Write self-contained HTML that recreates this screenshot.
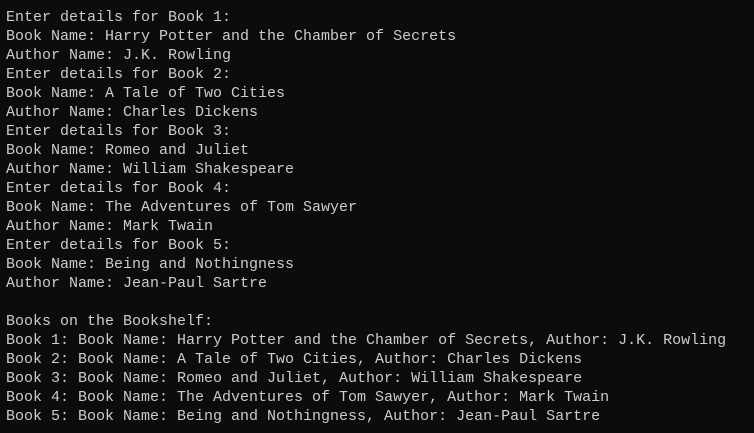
<!DOCTYPE html>
<html><head><meta charset="utf-8"><style>
html,body{margin:0;padding:0;background:#0c0c0c;width:754px;height:433px;overflow:hidden}
pre{margin:0;position:absolute;left:6px;top:8px;font-family:"Liberation Mono","DejaVu Sans Mono",monospace;font-size:15px;line-height:19px;color:#cccccc}
</style></head><body><pre>Enter details for Book 1:
Book Name: Harry Potter and the Chamber of Secrets
Author Name: J.K. Rowling
Enter details for Book 2:
Book Name: A Tale of Two Cities
Author Name: Charles Dickens
Enter details for Book 3:
Book Name: Romeo and Juliet
Author Name: William Shakespeare
Enter details for Book 4:
Book Name: The Adventures of Tom Sawyer
Author Name: Mark Twain
Enter details for Book 5:
Book Name: Being and Nothingness
Author Name: Jean-Paul Sartre

Books on the Bookshelf:
Book 1: Book Name: Harry Potter and the Chamber of Secrets, Author: J.K. Rowling
Book 2: Book Name: A Tale of Two Cities, Author: Charles Dickens
Book 3: Book Name: Romeo and Juliet, Author: William Shakespeare
Book 4: Book Name: The Adventures of Tom Sawyer, Author: Mark Twain
Book 5: Book Name: Being and Nothingness, Author: Jean-Paul Sartre</pre></body></html>
